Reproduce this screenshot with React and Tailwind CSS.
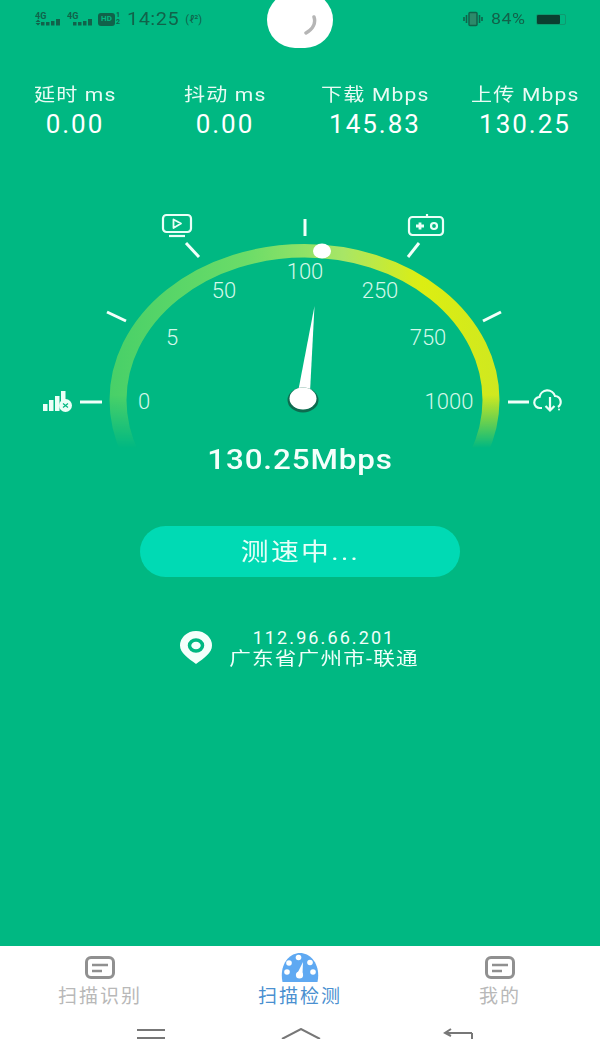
const FONT = "font-[Roboto,'Noto_Sans_CJK_SC',sans-serif]";

function Signal({ arrows }) {
  return (
    <svg width="26" height="14" viewBox="0 0 26 14" fill="#11624a">
      <text x="0" y="6.500" fontSize="9" fontWeight="700" fontFamily="Roboto, sans-serif">4G</text>
      {arrows && <path d="M0.500 10l2.500-2.500 2.500 2.500zM0.500 11l2.500 2.500 2.500-2.500z" />}
      <rect x="6" y="10" width="3.500" height="3.500" />
      <rect x="11" y="10" width="3.500" height="3.500" />
      <rect x="16" y="9" width="3.500" height="4.500" />
      <rect x="21" y="7" width="4" height="6.500" />
    </svg>
  );
}

function StatusBar() {
  return (
    <div className="flex h-[38px] items-center justify-between pl-[35px] pr-[34px] text-[#11624a]">
      <div className="flex items-center">
        <Signal arrows />
        <div className="ml-[6px]"><Signal /></div>
        <div className="ml-[5px] flex h-[13px] w-[17px] items-center justify-center rounded-[3px] bg-[#11624a] text-[8px] font-bold text-[#00b882]">HD</div>
        <div className="ml-[1px] flex w-[6px] flex-col text-[7px] font-bold leading-[7px]"><span>1</span><span>2</span></div>
        <span className="ml-[5px] origin-left scale-x-[1.1] text-[18px] leading-none tracking-[0.5px]">14:25</span>
        <span className="ml-[11px] text-[11px] leading-none">(ℓ²)</span>
      </div>
      <div className="flex items-center">
        <svg className="ml-[-2px]" width="22" height="16" viewBox="0 0 22 16" fill="none" stroke="#11624a">
          <rect x="7" y="1.500" width="8" height="13" rx="1" strokeWidth="1.500" fill="#2c8a6a" />
          <path d="M4.500 4v8M2 6v4M17.500 4v8M20 6v4" strokeWidth="1.600" />
        </svg>
        <span className="ml-[7px] w-[36px] origin-left scale-x-[1.18] text-[15px] leading-none tracking-[0.5px]">84%</span>
        <div className="ml-[9px] flex h-[11px] w-[30px] items-center rounded-[2px] border border-[#0f9a70]">
          <div className="h-full w-[23px] rounded-[1px] bg-[#0b3f30]" />
        </div>
      </div>
    </div>
  );
}

function Metric({ label, value }) {
  return (
    <div className="flex flex-col items-center text-white">
      <span className="scale-x-[1.17] whitespace-nowrap text-[18px] leading-[24px] tracking-[1px] text-[#e9fbf4]">{label}</span>
      <span className="mt-[2px] text-[26px] leading-[30px] tracking-[2px]">{value}</span>
    </div>
  );
}

function Gauge() {
  const ticks = [
    [80, 402, 102, 402],
    [107, 312, 126, 321],
    [186, 243, 199, 257],
    [305, 219, 305, 236],
    [408, 257, 419, 243],
    [483, 321, 501, 312],
    [508, 402, 529, 402],
  ];
  const labels = [
    ["0", 144, 409],
    ["5", 172, 345],
    ["50", 224, 298],
    ["100", 305, 279],
    ["250", 380, 298],
    ["750", 428, 345],
    ["1000", 449, 409],
  ];
  return (
    <svg className="block h-[250px] w-full" viewBox="0 205 600 250" fill="none">
      <defs>
        <linearGradient id="fade" gradientUnits="userSpaceOnUse" x1="0" y1="395" x2="0" y2="448">
          <stop offset="0" stopColor="#fff" />
          <stop offset="1" stopColor="#000" />
        </linearGradient>
        <mask id="m" maskUnits="userSpaceOnUse" x="0" y="205" width="600" height="250">
          <rect x="0" y="205" width="600" height="250" fill="url(#fade)" />
        </mask>
        <linearGradient id="arcLocal" gradientUnits="userSpaceOnUse" x1="-195" y1="0" x2="195" y2="0">
          <stop offset="0" stopColor="#48d068" />
          <stop offset="0.35" stopColor="#6bdc68" />
          <stop offset="0.6" stopColor="#a8e666" />
          <stop offset="0.8" stopColor="#dcee12" />
          <stop offset="1" stopColor="#cfe820" />
        </linearGradient>
      </defs>
      <g mask="url(#m)">
        <g transform="translate(304.500 400) scale(1 0.8)">
          <circle cx="0" cy="0" r="186.500" stroke="url(#arcLocal)" strokeWidth="17" />
        </g>
      </g>
      {ticks.map((t, i) => (
        <line key={i} x1={t[0]} y1={t[1]} x2={t[2]} y2={t[3]} stroke="#f2fffa" strokeWidth="3" />
      ))}
      {labels.map((l) => (
        <text key={l[0]} x={l[1]} y={l[2]} textAnchor="middle" fill="#d4f8ea" fontSize="22" fontWeight="300" fontFamily="Roboto, sans-serif">{l[0]}</text>
      ))}
      <ellipse cx="322" cy="251" rx="9" ry="7.500" fill="#fff" />
      <path d="M314.500 306 L298 392 L310 392 Z" fill="#fff" />
      <ellipse cx="303" cy="400" rx="15.500" ry="12.500" fill="#0d6b4f" />
      <ellipse cx="303" cy="398.500" rx="13.500" ry="11" fill="#fff" />
      <g stroke="#eafff7" strokeWidth="2.200">
        <rect x="163" y="215" width="28" height="17" rx="3.500" />
        <path d="M173.500 219.500 L181 223.500 L173.500 228 Z" strokeWidth="1.800" strokeLinejoin="round" />
        <line x1="169" y1="236" x2="185" y2="236" />
      </g>
      <g stroke="#eafff7" strokeWidth="2.200">
        <rect x="409" y="217" width="34" height="18" rx="3.500" />
        <line x1="427" y1="214" x2="427" y2="217" />
        <path d="M416 226h8M420 222.500v7" strokeWidth="2.800" />
        <circle cx="434" cy="226" r="3" />
      </g>
      <g fill="#eafff7">
        <rect x="43" y="404" width="4.500" height="7" />
        <rect x="49" y="400" width="4.500" height="11" />
        <rect x="55" y="396" width="4.500" height="15" />
        <rect x="61" y="391" width="4.500" height="14" />
        <circle cx="65.500" cy="405.500" r="6.500" />
      </g>
      <path d="M63 403.500l5 4M68 403.500l-5 4" stroke="#00b882" strokeWidth="1.200" />
      <path d="M542 408 h-2 a5.500 5.500 0 0 1 -0.500 -11 a8 8 0 0 1 15.500 -1 a6 6 0 0 1 3 11" stroke="#eafff7" strokeWidth="2.200" />
      <path d="M550 397v13M545.500 406l4.500 4.500 4.500-4.500" stroke="#eafff7" strokeWidth="2.200" />
      <circle cx="559" cy="409.500" r="1" fill="#eafff7" />
    </svg>
  );
}

function DocIcon() {
  return (
    <svg className="mt-[10px]" width="30" height="23" viewBox="0 0 30 23" fill="none" stroke="#909090">
      <rect x="1.500" y="1.500" width="27" height="20" rx="4.500" strokeWidth="3" />
      <path d="M7 9h16M7 15h10" strokeWidth="2.600" />
    </svg>
  );
}

function GaugeIcon() {
  return (
    <svg className="mt-[7px]" width="38" height="29" viewBox="0 0 38 29">
      <path d="M1.500 29 C-2 12 8 0 19 0 C30 0 40 12 36.500 29 Z" fill="#5fa9f2" />
      <g fill="#fff">
        <circle cx="17.500" cy="4.500" r="2.800" />
        <circle cx="8" cy="10" r="2.800" />
        <circle cx="29" cy="9.500" r="2.800" />
        <circle cx="6" cy="19" r="2.800" />
        <circle cx="32" cy="19" r="2.800" />
        <path d="M22 9 L21.500 21 L16.500 20 Z" />
        <circle cx="18.500" cy="22" r="3.600" />
      </g>
    </svg>
  );
}

function Tab({ icon, label, active }) {
  return (
    <div className="flex w-[200px] flex-col items-center">
      <div className="flex h-[34px] items-start">{icon}</div>
      <span className={`mt-[5px] whitespace-nowrap text-[19px] leading-[24px] tracking-[2px] ${active ? "text-[#4a90d0]" : "text-[#b8b8b8]"}`}>{label}</span>
    </div>
  );
}

export default function App() {
  return (
    <div className={`relative flex h-[1039px] w-[600px] flex-col overflow-hidden bg-white ${FONT}`}>
      <div className="relative flex h-[946px] shrink-0 flex-col bg-[#00b882]">
        <div className="absolute left-[267px] top-[-8px] flex h-[56px] w-[66px] items-center justify-center rounded-full bg-white">
          <svg width="20" height="24" viewBox="0 0 20 24" fill="none" className="ml-[22px] mt-[14px]">
            <path d="M13 2 C15 8 12 14 5 18" stroke="#b5b5b5" strokeWidth="3.500" strokeLinecap="round" />
          </svg>
        </div>
        <StatusBar />
        <div className="mt-[45px] grid grid-cols-4">
          <Metric label="延时 ms" value="0.00" />
          <Metric label="抖动 ms" value="0.00" />
          <Metric label="下载 Mbps" value="145.83" />
          <Metric label="上传 Mbps" value="130.25" />
        </div>
        <div className="mt-[66px]"><Gauge /></div>
        <div className="mt-[-12px] scale-x-[1.12] text-center text-[28px] font-medium leading-[34px] tracking-[0.8px] text-[#f4fffb]">130.25Mbps</div>
        <div className="mx-auto mt-[49px] flex h-[51px] w-[320px] items-center justify-center rounded-full bg-[#00dab4] text-[24px] tracking-[2px] text-[#e6fff8]">
          <span className="scale-x-[1.16]">测速中...</span>
        </div>
        <div className="ml-[180px] mt-[50px] flex items-center">
          <svg width="32" height="34" viewBox="0 0 32 34">
            <path d="M16 33 C8 27 0 22 0 14.500 A16 14.500 0 0 1 32 14.500 C32 22 24 27 16 33Z" fill="#f4fffb" />
            <ellipse cx="16" cy="14.500" rx="6.500" ry="5.500" fill="none" stroke="#00b882" strokeWidth="3.500" />
          </svg>
          <div className="ml-[17px] flex w-[190px] flex-col items-center text-[#f0fffa]">
            <span className="whitespace-nowrap text-[18px] leading-[21px] tracking-[2.100px]">112.96.66.201</span>
            <span className="scale-x-[1.2] whitespace-nowrap text-[18px] leading-[21px] tracking-[1px]">广东省广州市-联通</span>
          </div>
        </div>
      </div>
      <div className="flex flex-1 flex-col bg-white">
        <div className="flex justify-between">
          <Tab icon={<DocIcon />} label="扫描识别" />
          <Tab icon={<GaugeIcon />} label="扫描检测" active />
          <Tab icon={<DocIcon />} label="我的" />
        </div>
        <div className="mt-[19px] h-[21px]">
          <svg className="block" width="600" height="21" viewBox="0 0 600 21" fill="none" stroke="#777" strokeWidth="2">
            <path d="M137 2h28M137 10h28" />
            <path d="M282 11 L301 1 L320 11" />
            <path d="M472 5H446M451 1l-6 4 6 3M472 5v8" />
          </svg>
        </div>
      </div>
    </div>
  );
}
